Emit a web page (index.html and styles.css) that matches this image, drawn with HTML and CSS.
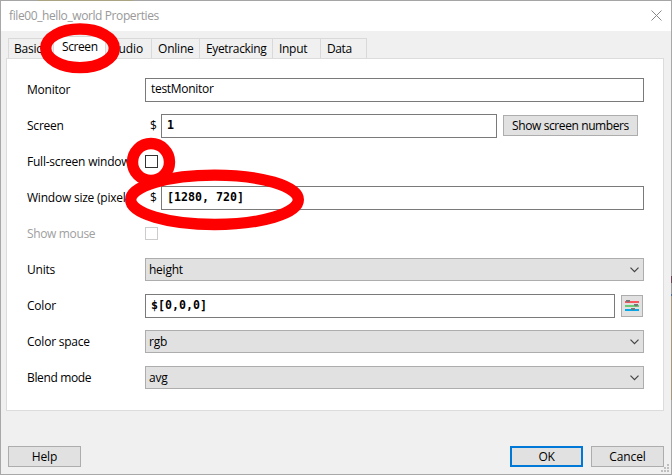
FILE: index.html
```html
<!DOCTYPE html>
<html lang="en">
<head>
<meta charset="utf-8">
<title>file00_hello_world Properties</title>
<link rel="stylesheet" href="styles.css">
</head>
<body>
<div class="frame">
<div class="dialog">
  <header class="titlebar">
    <span class="title">file00_hello_world Properties</span>
    <svg class="close" width="11" height="11" viewBox="0 0 11 11"><path d="M.5 .5l10 10M10.5 .5l-10 10"/></svg>
  </header>
  <nav class="tabs">
    <span class="tab basic">Basic</span>
    <span class="tab screen active">Screen</span>
    <span class="tab audio">Audio</span>
    <span class="tab online">Online</span>
    <span class="tab eye">Eyetracking</span>
    <span class="tab inp">Input</span>
    <span class="tab data">Data</span>
  </nav>
  <main class="panel">
    <div class="row"><label>Monitor</label><div class="field grow">testMonitor</div></div>
    <div class="row"><label>Screen</label><span class="dollar">$</span><div class="field code grow">1</div><button class="btn numbers">Show screen numbers</button></div>
    <div class="row"><label class="full">Full-screen window</label><span class="check"></span></div>
    <div class="row"><label class="size">Window size (pixels)</label><span class="dollar">$</span><div class="field code grow">[1280, 720]</div></div>
    <div class="row disabled"><label class="mouse">Show mouse</label><span class="check"></span></div>
    <div class="row"><label>Units</label><div class="combo"><span>height</span><svg width="9" height="6" viewBox="0 0 9 6"><path d="M.5 .7l4 4 4-4"/></svg></div></div>
    <div class="row"><label>Color</label><div class="field code grow">$[0,0,0]</div><button class="btn picker"><svg width="14" height="14" viewBox="0 0 14 14"><path class="red" d="M0 3h14"/><path class="green" d="M0 7h14"/><path class="blue" d="M0 11h14"/><path class="knob" d="M1 1h4v1.200l-1 1H2l-1-1zM9 5h4v1.200l-1 1h-2l-1-1zM6 9h4v1.200l-1 1H7l-1-1z"/></svg></button></div>
    <div class="row"><label>Color space</label><div class="combo"><span>rgb</span><svg width="9" height="6" viewBox="0 0 9 6"><path d="M.5 .7l4 4 4-4"/></svg></div></div>
    <div class="row"><label class="blend">Blend mode</label><div class="combo"><span>avg</span><svg width="9" height="6" viewBox="0 0 9 6"><path d="M.5 .7l4 4 4-4"/></svg></div></div>
  </main>
  <footer class="actions">
    <button class="btn">Help</button>
    <button class="btn primary">OK</button>
    <button class="btn">Cancel</button>
  </footer>
  <svg class="grip" width="8" height="8" viewBox="0 0 8 8"><path d="M6 0h2v2H6zM3 3h2v2H3zM6 3h2v2H6zM0 6h2v2H0zM3 6h2v2H3zM6 6h2v2H6z"/></svg>
</div>
</div>
<svg class="marks" width="672" height="475" viewBox="0 0 672 475">
  <ellipse cx="80" cy="48.300" rx="34.300" ry="19.300"/>
  <circle cx="151" cy="162" r="18.500"/>
  <ellipse cx="214.500" cy="199.800" rx="83.800" ry="24.700"/>
</svg>
</body>
</html>
```
FILE: styles.css
```css
* { box-sizing: border-box; }
body {
  margin: 0;
  width: 672px;
  height: 475px;
  overflow: hidden;
  position: relative;
  font: 12px/16px "Open Sans", "Noto Sans", sans-serif;
  color: #000;
}
.frame {
  height: 475px;
  padding: 1px;
  background:
    linear-gradient(90deg, #a5a5a5 38px, #aaa580 38px, #aaa580 133px, #a5a5a5 133px) top / 100% 1px no-repeat,
    linear-gradient(#a8a8a8 276px, #6b4050 276px, #6b4050 283px, #9a9a9a 283px, #9a9a9a 294px, #456a9a 294px, #456a9a 296px, #a39a7c 296px, #a39a7c 400px, #a8a8a8 400px) right / 1px 100% no-repeat,
    #a8a8a8;
}
.dialog {
  position: relative;
  height: 473px;
  background: #f0f0f0;
  display: flex;
  flex-direction: column;
}
.titlebar {
  height: 30px;
  background: #fff;
  color: #999;
  display: flex;
  justify-content: space-between;
  padding: 7px 9px 0 8px;
}
.title { letter-spacing: -.4px; }
.close { margin-top: 2px; fill: none; stroke: #888; }
.tabs {
  height: 27px;
  padding: 7px 0 0 7px;
  display: flex;
}
.tab {
  height: 20px;
  border: 1px solid #d9d9d9;
  border-width: 1px 1px 0 0;
  padding: 2px 0 0 6px;
  white-space: nowrap;
}
.basic { width: 46px; border-left-width: 1px; padding-left: 5px; letter-spacing: -.2px; }
.screen { width: 52px; padding-left: 8px; letter-spacing: -.4px; }
.audio { width: 46px; padding-left: 5px; letter-spacing: -.1px; }
.online { width: 48px; letter-spacing: -.2px; }
.eye { width: 73px; letter-spacing: -.35px; }
.inp { width: 48px; letter-spacing: -.3px; }
.data { width: 46px; letter-spacing: -.4px; }
.tab.active {
  height: 23px;
  margin-top: -2px;
  background: #fff;
  position: relative;
  z-index: 1;
}
.panel {
  height: 353px;
  margin: 0 7px 0 5px;
  border: 1px solid #dcdcdc;
  background: #fff;
  padding: 13px 19px 0 20px;
}
.row { height: 36px; display: flex; align-items: center; }
.row label { width: 118px; flex: none; white-space: nowrap; overflow: hidden; letter-spacing: -.22px; }
.row .mouse, .row .blend { letter-spacing: -.35px; }
.dollar { width: 16px; padding-left: 5px; }
.field {
  height: 24px;
  border: 1px solid #7a7a7a;
  background: #fff;
  padding: 2px 5px;
  letter-spacing: -.3px;
}
.grow { flex: 1; }
.code { font: bold 11.63px/16px "DejaVu Sans Mono", monospace; letter-spacing: 0; }
.btn {
  height: 21px;
  width: 73px;
  padding: 0;
  border: 1px solid #adadad;
  background: #e1e1e1;
  font: inherit;
  line-height: 17px;
  color: #000;
}
.numbers { width: 135px; margin: 0 6px 1px; letter-spacing: -.4px; }
.picker { width: 22px; height: 22px; margin: 0 1px 0 6px; display: flex; align-items: center; justify-content: center; }
.picker path { stroke-width: 2; }
.red { stroke: #fb5660; }
.green { stroke: #6cca74; }
.blue { stroke: #02a9ea; }
.picker .knob { stroke: none; fill: #757575; }
.check { width: 13px; height: 13px; margin-top: -1px; border: 1px solid #333; background: #fff; }
.disabled { color: #a0a0a0; }
.disabled .check { border-color: #ccc; }
.combo {
  flex: 1;
  height: 23px;
  margin-bottom: 1px;
  border: 1px solid #adadad;
  background: #e1e1e1;
  display: flex;
  align-items: center;
  justify-content: space-between;
  padding: 1px 4px 0 3px;
  letter-spacing: -.25px;
}
.combo svg { fill: none; stroke: #444; stroke-width: 1.2; }
.actions { display: flex; padding: 35px 7px 0; gap: 8px; }
.actions .btn { letter-spacing: -.1px; }
.actions .btn:first-child { margin-right: auto; }
.actions .primary { border: 2px solid #0078d7; line-height: 15px; letter-spacing: -.3px; }
.grip { position: absolute; right: 2px; bottom: 2px; fill: #bfbfbf; }
.marks { position: absolute; left: 0; top: 0; z-index: 2; fill: none; stroke: #f00; stroke-width: 11.4; }
```
